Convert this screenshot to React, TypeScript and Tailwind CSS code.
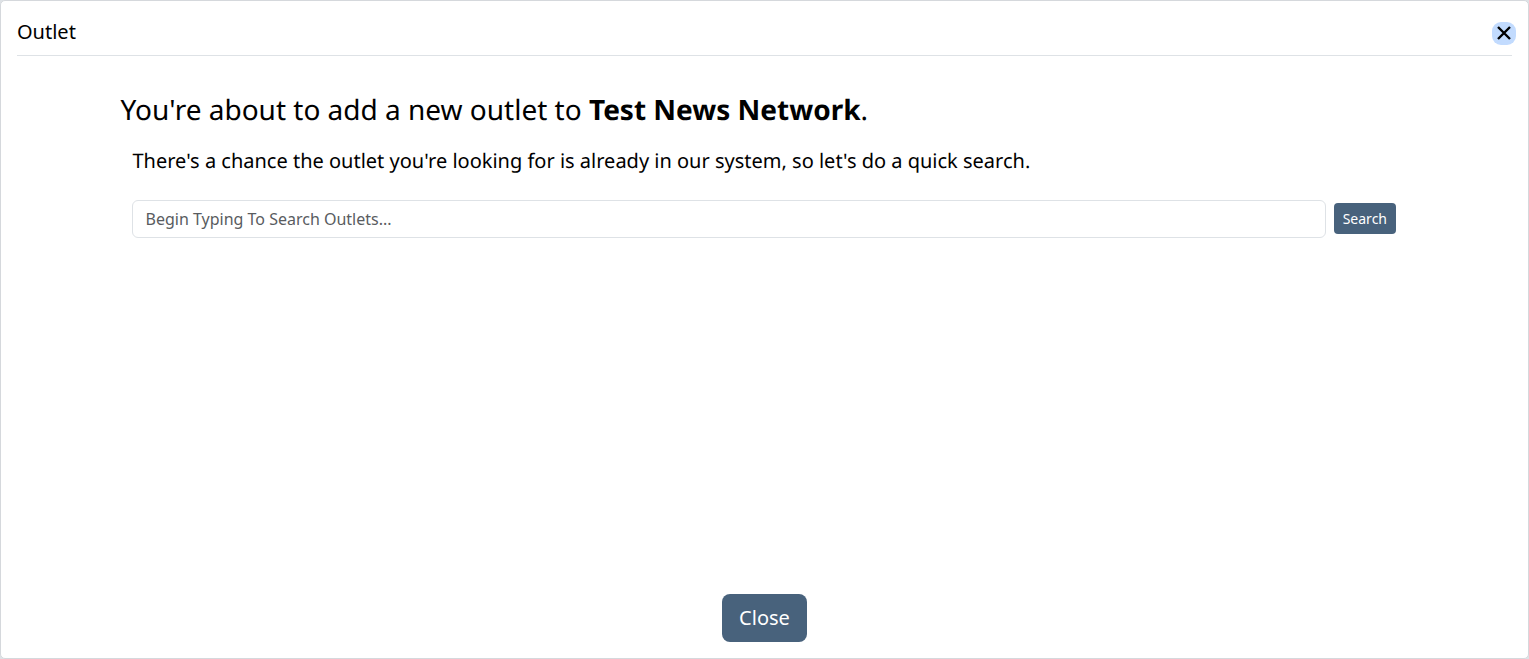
export default function App() {
  return (
    <div className="h-[659px] w-[1529px] overflow-hidden bg-[#dee2e6] font-['Noto_Sans',sans-serif] text-black">
      <div className="flex h-full flex-col rounded-[5px] border border-[#d5d8dc] bg-white">
        <div className="mx-4 flex h-[55px] shrink-0 items-center justify-between border-b border-[#dee2e6] pt-2">
          <h5 className="text-[20px] leading-[24px]">Outlet</h5>
          <button className="-mr-[4px] mt-[2px] flex h-[23px] w-6 items-center justify-center rounded-[9px] bg-[#c2dbfe]">
            <svg width="16" height="16" viewBox="0 0 16 16" fill="none" stroke="#000" strokeWidth="2.4">
              <path d="M2 2l12 12M14 2L2 14" />
            </svg>
          </button>
        </div>

        <div className="flex-1 pl-[119px] pr-[132px]">
          <h3 className="mt-[34px] pl-[0.5px] text-[28px] leading-[40px] [text-rendering:geometricPrecision]">
            You're about to add a new outlet to <strong className="font-bold">Test News Network</strong>.
          </h3>
          <div className="pl-3">
            <p className="mt-[19px] pl-[0.5px] text-[20px] leading-[24px] [text-rendering:geometricPrecision]">
              There's a chance the outlet you're looking for is already in our system, so let's do a quick search.
            </p>
            <div className="mt-[27px] flex items-start gap-2">
              <input
                type="text"
                placeholder="Begin Typing To Search Outlets..."
                className="h-[38px] flex-1 rounded-[6px] border border-[#dee2e6] bg-white px-[12.5px] text-[16px] outline-none placeholder:text-[#595c5f]"
              />
              <button className="mt-[3px] h-[31px] rounded-[4px] bg-[#48627c] px-[9px] text-[14px] text-white">Search</button>
            </div>
          </div>
        </div>

        <div className="flex shrink-0 justify-center pb-4">
          <button className="h-12 w-[85px] rounded-[8px] bg-[#48627c] text-[20px] text-white">Close</button>
        </div>
      </div>
    </div>
  );
}
